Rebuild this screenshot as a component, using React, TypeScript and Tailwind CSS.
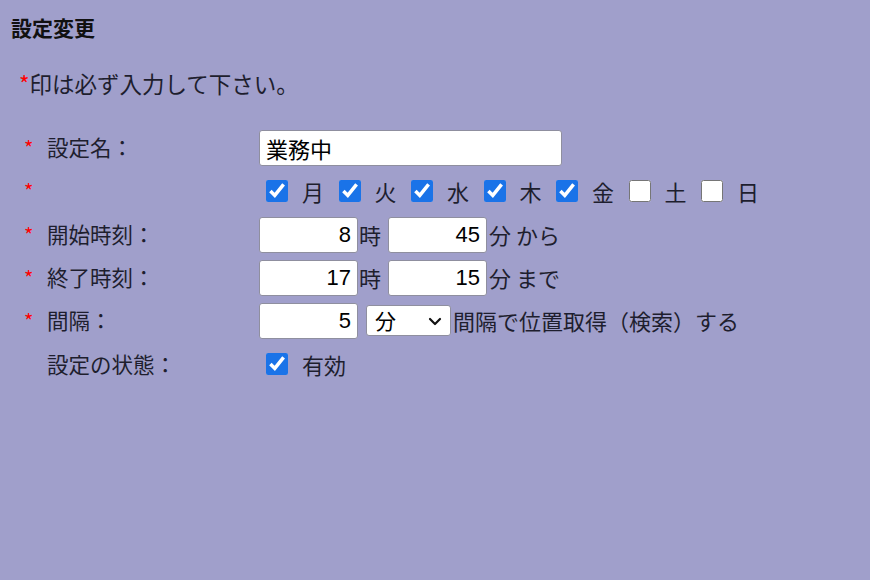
const days = [
  { name: "月", on: true },
  { name: "火", on: true },
  { name: "水", on: true },
  { name: "木", on: true },
  { name: "金", on: true },
  { name: "土", on: false },
  { name: "日", on: false },
];

const font = "font-['Noto_Sans_CJK_JP',sans-serif]";
const box =
  "h-[36px] rounded-[3px] border border-[#8f8f9f] bg-white px-[6px] text-[22px] text-black outline-none font-['Liberation_Sans','Noto_Sans_CJK_JP',sans-serif]";
const check = "m-0 h-[22px] w-[22px] shrink-0 accent-[#1a73e8]";

const Star = () => <span className="text-[20px] text-[#ff0000]">*</span>;

const Row = ({
  required,
  label,
  h,
  children,
}: {
  required?: boolean;
  label?: string;
  h: string;
  children: React.ReactNode;
}) => (
  <div className={`flex items-center ${h}`}>
    <div className="w-[23px] shrink-0">{required && <Star />}</div>
    <div className="w-[212px] shrink-0 text-[21.5px]">{label}</div>
    <div className="flex items-center text-[22px]">{children}</div>
  </div>
);

export default function App() {
  return (
    <div className={`min-h-[580px] w-full bg-[#a09fcb] text-[#1e1e2e] ${font}`}>
      <div className="pl-[11px] pt-[15px]">
        <h2 className="text-[21px] font-bold leading-[24px] text-[#111]">設定変更</h2>
        <p className="mt-[29px] pl-[8px] text-[22.5px] leading-[30px]">
          <span className="text-[#ff0000]">*</span>印は必ず入力して下さい。
        </p>
      </div>

      <div className="mt-[28px] pl-[24px]">
        <Row required label="設定名：" h="h-[43px]">
          <input
            className={`${box} h-[35px] w-[303px] px-[5px] font-['Noto_Sans_CJK_JP',sans-serif]`}
            defaultValue="業務中"
          />
        </Row>

        <Row required h="h-[44px]">
          <div className="flex items-center pl-[7px]">
            {days.map((d) => (
              <label key={d.name} className="flex w-[72.5px] items-center">
                <input type="checkbox" defaultChecked={d.on} className={check} />
                <span className="ml-[14px]">{d.name}</span>
              </label>
            ))}
          </div>
        </Row>

        <Row required label="開始時刻：" h="h-[43px]">
          <input className={`${box} w-[99px] text-right`} defaultValue="8" />
          <span className="ml-[1px] w-[29px]">時</span>
          <input className={`${box} w-[99px] text-right`} defaultValue="45" />
          <span className="ml-[2px]">分 から</span>
        </Row>

        <Row required label="終了時刻：" h="h-[43px]">
          <input className={`${box} w-[99px] text-right`} defaultValue="17" />
          <span className="ml-[1px] w-[29px]">時</span>
          <input className={`${box} w-[99px] text-right`} defaultValue="15" />
          <span className="ml-[2px]">分 まで</span>
        </Row>

        <Row required label="間隔：" h="h-[43px]">
          <input className={`${box} w-[99px] text-right`} defaultValue="5" />
          <div className="relative ml-[8px] flex h-[31px] w-[85px] items-center rounded-[3px] border border-[#8f8f9f] bg-white pl-[8px] text-[21px] text-black">
            分
            <svg
              className="absolute right-[8px] top-[11px]"
              width="14"
              height="9"
              viewBox="0 0 14 9"
              fill="none"
              stroke="#111"
              strokeWidth="2.2"
              strokeLinecap="round"
              strokeLinejoin="round"
            >
              <path d="M2 2l5 5 5-5" />
            </svg>
          </div>
          <span className="ml-[2px]">間隔で位置取得（検索）する</span>
        </Row>

        <Row label="設定の状態：" h="h-[44px]">
          <label className="flex items-center pl-[7px]">
            <input type="checkbox" defaultChecked className={check} />
            <span className="ml-[14px]">有効</span>
          </label>
        </Row>
      </div>
    </div>
  );
}
